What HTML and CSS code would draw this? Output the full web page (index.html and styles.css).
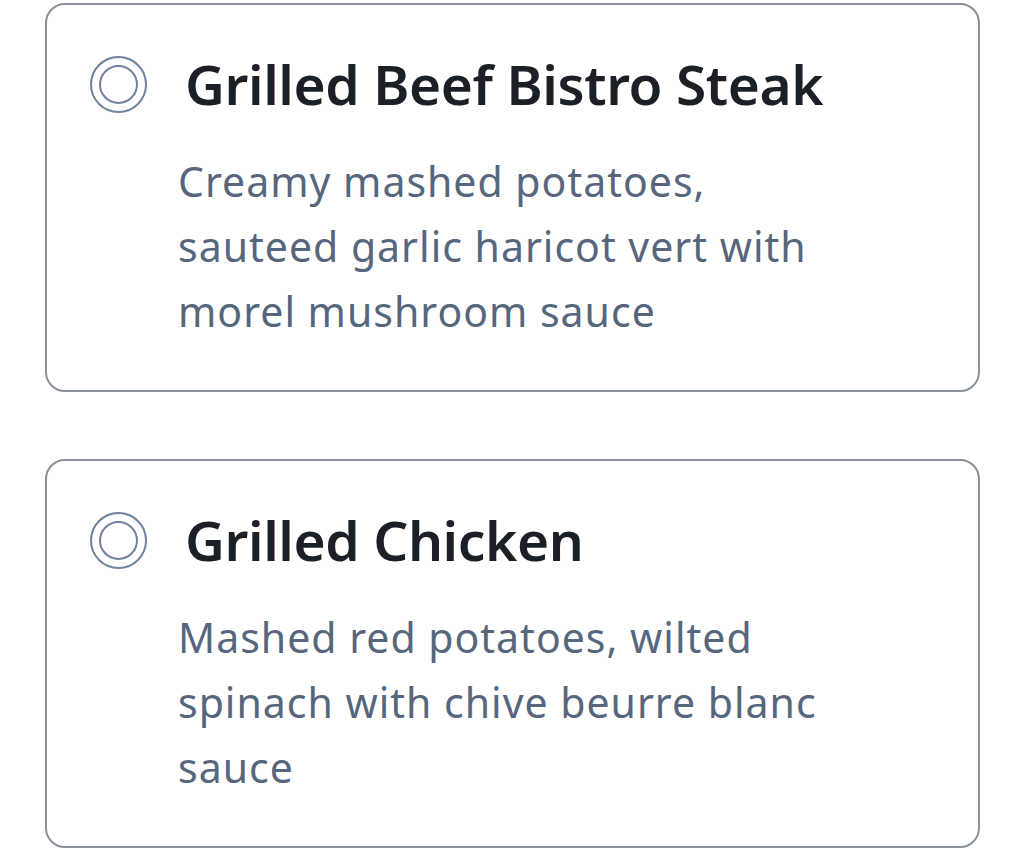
FILE: index.html
```html
<!DOCTYPE html>
<html>
<head>
<meta charset="utf-8">
<link rel="stylesheet" href="styles.css">
</head>
<body>
<div class="list">
  <div class="card">
    <div class="head">
      <span class="radio"><span class="dot"></span></span>
      <span class="title">Grilled Beef Bistro Steak</span>
    </div>
    <p class="desc">Creamy mashed potatoes, sauteed garlic haricot vert with morel mushroom sauce</p>
  </div>
  <div class="card">
    <div class="head">
      <span class="radio"><span class="dot"></span></span>
      <span class="title">Grilled Chicken</span>
    </div>
    <p class="desc">Mashed red potatoes, wilted spinach with chive beurre blanc sauce</p>
  </div>
</div>
</body>
</html>
```
FILE: styles.css
```css
html, body {
  margin: 0;
  padding: 0;
  background: #ffffff;
}
body {
  font-family: "Noto Sans", "Open Sans", sans-serif;
}
.list {
  display: flex;
  flex-direction: column;
  gap: 67px;
  padding: 3px 43px 0 45px;
}
.card {
  border: 2px solid #8b9199;
  border-radius: 20px;
  padding: 47px 40px 0 43px;
  box-sizing: border-box;
  height: 389px;
}
.head {
  display: flex;
  align-items: center;
  gap: 38px;
  height: 64px;
}
.radio {
  width: 57px;
  height: 57px;
  border: 2px solid #6f82a0;
  border-radius: 50%;
  box-sizing: border-box;
  display: flex;
  align-items: center;
  justify-content: center;
  flex: none;
}
.dot {
  width: 39px;
  height: 39px;
  border: 2px solid #6f82a0;
  border-radius: 50%;
  box-sizing: border-box;
}
.title {
  font-size: 55px;
  font-weight: 600;
  letter-spacing: -0.4px;
  color: #1b1f26;
  line-height: 64px;
}
.desc {
  margin: 33px 0 0 88px;
  font-size: 41px;
  letter-spacing: 1px;
  line-height: 65px;
  color: #56667c;
  max-width: 665px;
}
```
